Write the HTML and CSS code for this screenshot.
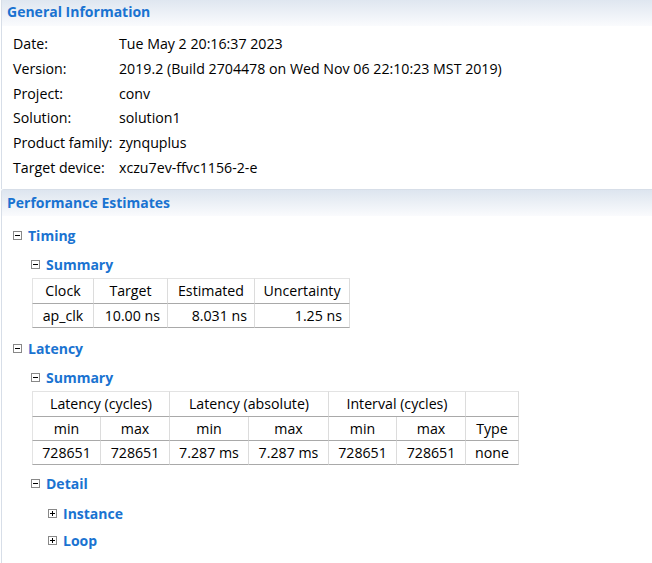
FILE: index.html
```html
<!DOCTYPE html>
<html>
<head>
<meta charset="utf-8">
<link rel="stylesheet" href="styles.css">
</head>
<body>
<section class="panel first">
  <div class="panel-head">General Information</div>
  <div class="info">
    <div class="row"><span class="lbl">Date:</span><span>Tue May 2 20:16:37 2023</span></div>
    <div class="row"><span class="lbl">Version:</span><span>2019.2 (Build 2704478 on Wed Nov 06 22:10:23 MST 2019)</span></div>
    <div class="row"><span class="lbl">Project:</span><span>conv</span></div>
    <div class="row"><span class="lbl">Solution:</span><span>solution1</span></div>
    <div class="row"><span class="lbl">Product family:</span><span>zynquplus</span></div>
    <div class="row"><span class="lbl">Target device:</span><span>xczu7ev-ffvc1156-2-e</span></div>
  </div>
</section>
<section class="panel second">
  <div class="panel-head">Performance Estimates</div>
  <div class="tree">
    <div class="node l0 timing"><span class="tog minus"></span>Timing</div>
    <div class="node l1 tsum"><span class="tog minus"></span>Summary</div>
    <table class="grid t1">
      <tr><td class="c1">Clock</td><td class="c2">Target</td><td class="c3">Estimated</td><td class="c4">Uncertainty</td></tr>
      <tr><td>ap_clk</td><td class="r">10.00 ns</td><td class="r">8.031 ns</td><td class="r">1.25 ns</td></tr>
    </table>
    <div class="node l0 lat"><span class="tog minus"></span>Latency</div>
    <div class="node l1 lsum"><span class="tog minus"></span>Summary</div>
    <table class="grid t2">
      <tr><td colspan="2">Latency (cycles)</td><td colspan="2">Latency (absolute)</td><td colspan="2">Interval (cycles)</td><td class="blank"></td></tr>
      <tr><td class="d1">min</td><td class="d2">max</td><td class="d3">min</td><td class="d4">max</td><td class="d5">min</td><td class="d6">max</td><td class="d7">Type</td></tr>
      <tr><td>728651</td><td>728651</td><td>7.287 ms</td><td>7.287 ms</td><td>728651</td><td>728651</td><td>none</td></tr>
    </table>
    <div class="node l1 det"><span class="tog minus"></span>Detail</div>
    <div class="node l2 inst"><span class="tog plus"></span>Instance</div>
    <div class="node l2 loop"><span class="tog plus"></span>Loop</div>
  </div>
</section>
</body>
</html>
```

FILE: styles.css
```css
html, body {
  margin: 0;
  padding: 0;
  background: #fff;
}
body {
  font-family: "Open Sans", "Noto Sans", sans-serif;
  font-size: 14.2px;
  color: #000;
  width: 652px;
  height: 563px;
  overflow: hidden;
}
.panel {
  border-left: 1px solid #d7dee8;
  border-top: 1px solid #d7dee8;
  border-top-left-radius: 3px;
  margin-left: 1px;
}
.panel.first {
  border-top: none;
  margin-top: -2px;
}
.panel.second {
  min-height: 380px;
}
.panel-head {
  height: 26px;
  line-height: 26px;
  padding-left: 5px;
  font-weight: bold;
  font-size: 14px;
  color: #1a73d1;
  background: linear-gradient(to bottom, #dde5ef 0%, #fafbfd 100%);
}
.first .panel-head {
  height: 28px;
  line-height: 28px;
}
.info {
  padding: 6px 0 8px 11px;
}
.row {
  display: flex;
  height: 24.8px;
  line-height: 24.8px;
}
.lbl {
  width: 106px;
}
.tree {
  padding-top: 6px;
}
.node {
  display: flex;
  align-items: center;
  font-weight: bold;
  font-size: 14px;
  color: #1a73d1;
  height: 20px;
}
.l0 { padding-left: 11px; }
.l1 { padding-left: 29px; }
.l2 { padding-left: 46px; }
.tog {
  width: 7px;
  height: 7px;
  border: 1px solid #888;
  margin-right: 6px;
  position: relative;
  flex: none;
}
.tog::before {
  content: "";
  position: absolute;
  left: 1px;
  top: 3px;
  width: 5px;
  height: 1px;
  background: #000;
}
.plus::after {
  content: "";
  position: absolute;
  left: 3px;
  top: 1px;
  width: 1px;
  height: 5px;
  background: #000;
}
.timing { margin-top: 4px; }
.tsum { margin-top: 9px; }
.lat { margin-top: 11px; }
.lsum { margin-top: 9px; }
.det { margin-top: 9px; }
.inst { margin-top: 10px; }
.loop { margin-top: 7px; }
.grid {
  border-collapse: separate;
  border-spacing: 0;
  margin-left: 30px;
  margin-top: 3px;
  font-size: 14.2px;
}
.grid td {
  border-right: 1px solid #dcdcdc;
  border-bottom: 1px solid #a9a9a9;
  height: 24px;
  padding: 0 7px;
  text-align: center;
  white-space: nowrap;
  box-sizing: border-box;
}
.grid tr:first-child td {
  border-top: 1px solid #e3e3e3;
  height: 26px;
}
.grid td:first-child {
  border-left: 1px solid #e3e3e3;
}
.grid td.r {
  text-align: right;
}
.t1 .c1 { width: 62px; }
.t1 .c2 { width: 74px; }
.t1 .c3 { width: 87px; }
.t1 .c4 { width: 95px; }
.t2 .d1 { width: 69px; }
.t2 .d2 { width: 69px; }
.t2 .d3 { width: 79px; }
.t2 .d4 { width: 80px; }
.t2 .d5 { width: 68px; }
.t2 .d6 { width: 69px; }
.t2 .d7 { width: 53px; }
```
